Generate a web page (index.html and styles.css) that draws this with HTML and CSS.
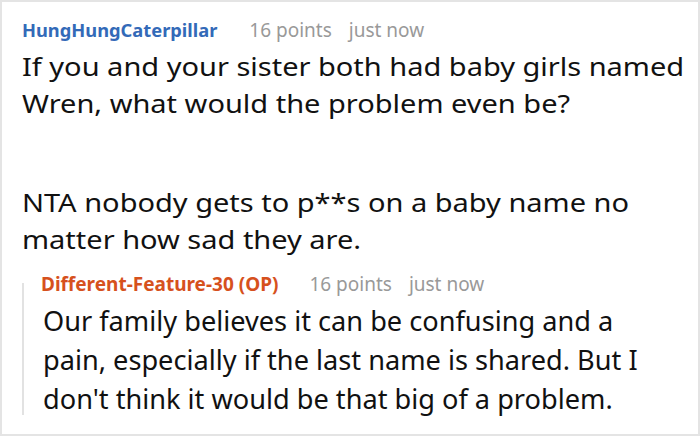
FILE: index.html
```html
<!DOCTYPE html>
<html>
<head>
<meta charset="utf-8">
<link rel="stylesheet" href="styles.css">
</head>
<body>
<div class="frame">
  <div class="comment">
    <div class="meta">
      <span class="user">HungHungCaterpillar</span>
      <span class="info">16 points</span>
      <span class="info">just now</span>
    </div>
    <div class="body wide">
      <p>If you and your sister both had baby girls named Wren, what would the problem even be?</p>
      <p>NTA nobody gets to p**s on a baby name no matter how sad they are.</p>
    </div>
    <div class="reply">
      <div class="meta">
        <span class="user op">Different-Feature-30 (OP)</span>
        <span class="info">16 points</span>
        <span class="info">just now</span>
      </div>
      <div class="body narrow">
        <p>Our family believes it can be confusing and a pain, especially if the last name is shared. But I don't think it would be that big of a problem.</p>
      </div>
    </div>
  </div>
</div>
</body>
</html>
```
FILE: styles.css
```css
html, body {
  margin: 0;
  padding: 0;
  background: #fff;
}
.frame {
  width: 700px;
  height: 436px;
  box-sizing: border-box;
  border: 2px solid #e4e4e4;
  overflow: hidden;
  font-family: "Noto Sans", "Open Sans", sans-serif;
  color: #111;
}
.comment {
  padding: 16px 0 0 20px;
}
.meta {
  display: flex;
  align-items: baseline;
  line-height: 24px;
  white-space: nowrap;
}
.user {
  font-size: 18.3px;
  font-weight: 700;
  color: #336ab8;
  margin-right: 32px;
}
.user.op {
  font-size: 19px;
  color: #d6511d;
  margin-right: 31px;
}
.info {
  font-size: 19px;
  color: #999;
  margin-right: 17px;
}
.body p {
  margin: 0;
}
.wide {
  font-size: 26px;
  line-height: 37px;
  width: 600px;
  margin-top: 6px;
  transform: scaleX(1.115);
  transform-origin: left top;
}
.wide p + p {
  margin-top: 62px;
}
.reply {
  position: relative;
  margin-top: 14px;
  padding-left: 23px;
  margin-left: -2px;
}
.reply::before {
  content: "";
  position: absolute;
  left: 2px;
  top: 11px;
  height: 132px;
  border-left: 2px solid #e2e2e2;
}
.reply .meta {
  margin-left: -2px;
}
.narrow {
  font-size: 28px;
  line-height: 39px;
  width: 640px;
  margin-top: 5px;
  transform: scaleX(0.97);
  transform-origin: left top;
}
```
